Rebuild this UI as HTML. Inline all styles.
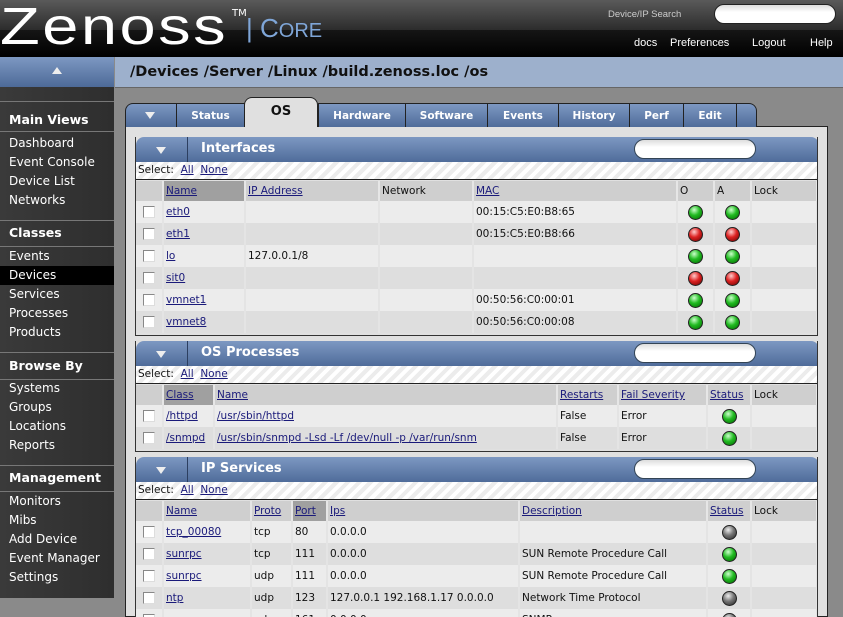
<!DOCTYPE html>
<html style="height:617px;overflow:hidden"><head><meta charset="utf-8"><style>
*{box-sizing:border-box;margin:0;padding:0}
body{width:843px;height:617px;overflow:hidden;background:#8a8a8a;font-family:"DejaVu Sans","Liberation Sans",sans-serif;font-size:10px;color:#111;position:relative}
.abs{position:absolute}
#top{left:0;top:0;width:843px;height:30px;background:linear-gradient(#5a5a5a,#2c2c2c)}
#nav{left:0;top:30px;width:843px;height:27px;background:linear-gradient(#151515,#000)}
#logo{left:0;top:-3px;font-family:"Liberation Sans",sans-serif;font-size:52px;color:#fff;letter-spacing:2px;transform:scaleX(1.25);transform-origin:left}
#core{left:246px;top:13px;font-family:"Liberation Sans",sans-serif;font-size:26px;color:#7fa6d8}
.navl{top:37px;color:#fff;font-size:11px;font-family:"Liberation Sans",sans-serif}
#side{left:0;top:57px;width:114px;height:541px;background:linear-gradient(90deg,#3a3a3a,#2e2e2e)}
#sidetop{left:0;top:57px;width:114px;height:30px;background:linear-gradient(#7d98c2,#4d6a98)}
.sh{left:9px;color:#fff;font-weight:bold;font-size:12.5px;font-family:"DejaVu Sans",sans-serif}
.si{left:9px;color:#fff;font-size:12px;font-family:"DejaVu Sans",sans-serif}
.sep{left:0;width:114px;height:1px;background:#777}
#crumb{left:115px;top:57px;width:728px;height:31px;background:#9db0cc;border-bottom:1px solid #666;font-weight:bold;font-size:14.5px;padding:7px 0 0 15px;color:#111}
#panel{left:125px;top:126px;width:703px;height:491px;background:#e0e0e0;border:1px solid #222}
.tab{top:103px;height:24px;background:linear-gradient(#7d98c2,#4f6c9a);color:#fff;font-weight:bold;font-size:10.5px;text-align:center;padding-top:6px;border:1px solid #222;border-bottom:none}
.box{left:135px;width:683px;background:#e0e0e0;border:1px solid #333;border-top:none;overflow:hidden}
.bh{position:absolute;left:0;top:0;width:683px;height:25px;background:linear-gradient(#7d98c2,#4f6c9a);border-radius:8px 8px 0 0;color:#fff;font-weight:bold;font-size:13px}
.bh .t{position:absolute;left:65px;top:4px}
.bh .dd{position:absolute;left:0;top:0;width:52px;height:25px;border-right:1px solid #2c3f60;border-radius:8px 0 0 0}
.tri{width:0;height:0;border-left:5px solid transparent;border-right:5px solid transparent;border-top:7px solid #eee;position:absolute;left:20px;top:10px}
.srch{position:absolute;left:498px;top:2px;width:122px;height:20px;background:linear-gradient(#ddd,#fff 40%);border-radius:10px;border:1px solid #345}
.sel{position:absolute;left:0;top:25px;width:681px;height:18px;background:repeating-linear-gradient(135deg,#fff 0 4px,#ececec 4px 8px);border-bottom:1px solid #222;padding:2px 0 0 2px;font-size:10.5px}
a{color:#1a1a7a;text-decoration:underline}
table{position:absolute;left:0;top:44px;border-collapse:collapse;table-layout:fixed;font-size:10.5px}
td{height:22px;border-right:2px solid #e4e4e4;padding-left:2px;white-space:nowrap;overflow:hidden}
tr.h td{height:20px;background:#cfcfcf;border-right:2px solid #e6e6e6}
tr.h td.s{background:#a0a0a0}
tr.r1 td{background:#ececec}tr.r2 td{background:#dedede}
.cb{display:inline-block;width:12px;height:12px;background:#fff;border:1px solid #888;border-right-color:#ddd;border-bottom-color:#ddd;margin-left:5px;vertical-align:middle}
.d{display:inline-block;width:15px;height:15px;border-radius:50%;border:1px solid #222;vertical-align:middle;margin-left:8px}
.g{background:radial-gradient(circle at 40% 30%,#cfc,#2b2 45%,#060)}
.rd{background:radial-gradient(circle at 40% 30%,#fcc,#d22 45%,#600)}
.gr{background:radial-gradient(circle at 40% 30%,#eee,#777 45%,#222)}
</style></head><body>
<div id="top" class="abs"></div><div id="nav" class="abs"></div>
<div id="logo" class="abs">Zenoss</div>
<div class="abs" style="left:232px;top:8px;color:#fff;font-size:10px">TM</div>
<div id="core" class="abs">| C<span style="font-size:20px">ORE</span></div>
<div class="abs" style="left:608px;top:9px;color:#ccc;font-size:9.5px;font-family:'Liberation Sans',sans-serif">Device/IP Search</div>
<div class="abs" style="left:714px;top:4px;width:122px;height:20px;background:linear-gradient(#ddd,#fff 40%);border-radius:10px;border:1px solid #222"></div>
<div class="abs navl" style="left:634px">docs</div>
<div class="abs navl" style="left:670px">Preferences</div>
<div class="abs navl" style="left:752px">Logout</div>
<div class="abs navl" style="left:810px">Help</div>
<div id="side" class="abs"></div>
<div id="sidetop" class="abs"><div class="tri" style="left:52px;top:10px;border-top:none;border-bottom:7px solid #eee"></div></div>
<div class="abs sep" style="top:101px"></div><div class="abs sh" style="top:112px">Main Views</div><div class="abs sep" style="top:131px"></div>
<div class="abs si" style="top:136px">Dashboard</div><div class="abs si" style="top:155px">Event Console</div><div class="abs si" style="top:174px">Device List</div><div class="abs si" style="top:193px">Networks</div>
<div class="abs sep" style="top:220px"></div><div class="abs sh" style="top:225px">Classes</div><div class="abs sep" style="top:246px"></div>
<div class="abs si" style="top:249px">Events</div>
<div class="abs" style="left:0;top:266px;width:114px;height:19px;background:#000"></div>
<div class="abs si" style="top:268px">Devices</div><div class="abs si" style="top:287px">Services</div><div class="abs si" style="top:306px">Processes</div><div class="abs si" style="top:325px">Products</div>
<div class="abs sep" style="top:352px"></div><div class="abs sh" style="top:358px">Browse By</div><div class="abs sep" style="top:379px"></div>
<div class="abs si" style="top:381px">Systems</div><div class="abs si" style="top:400px">Groups</div><div class="abs si" style="top:419px">Locations</div><div class="abs si" style="top:438px">Reports</div>
<div class="abs sep" style="top:465px"></div><div class="abs sh" style="top:470px">Management</div><div class="abs sep" style="top:491px"></div>
<div class="abs si" style="top:494px">Monitors</div><div class="abs si" style="top:513px">Mibs</div><div class="abs si" style="top:532px">Add Device</div><div class="abs si" style="top:551px">Event Manager</div><div class="abs si" style="top:570px">Settings</div>
<div id="crumb" class="abs">/Devices /Server /Linux /build.zenoss.loc /os</div>
<div id="panel" class="abs"></div>
<div class="abs tab" style="left:125px;width:52px;border-radius:8px 0 0 0"><div class="tri" style="left:19px;top:8px"></div></div>
<div class="abs tab" style="left:176px;width:69px">Status</div>
<div class="abs tab" style="left:244px;width:74px;top:97px;height:30px;background:#e0e0e0;color:#111;font-size:13px;border-radius:8px 8px 0 0;padding-top:6px;border-bottom:none">OS</div>
<div class="abs tab" style="left:318px;width:88px">Hardware</div>
<div class="abs tab" style="left:405px;width:83px">Software</div>
<div class="abs tab" style="left:487px;width:72px">Events</div>
<div class="abs tab" style="left:558px;width:72px">History</div>
<div class="abs tab" style="left:629px;width:55px">Perf</div>
<div class="abs tab" style="left:683px;width:54px">Edit</div>
<div class="abs tab" style="left:736px;width:21px;border-radius:0 8px 0 0"></div>

<div class="abs box" style="top:137px;height:199px">
<div class="bh"><div class="dd"><div class="tri"></div></div><div class="t">Interfaces</div><div class="srch"></div></div>
<div class="sel">Select: &nbsp;<a>All</a> &nbsp;<a>None</a></div>
<table style="width:681px"><colgroup><col style="width:27px"><col style="width:82px"><col style="width:134px"><col style="width:94px"><col style="width:204px"><col style="width:37px"><col style="width:37px"><col style="width:66px"></colgroup>
<tr class="h"><td></td><td class="s"><a>Name</a></td><td><a>IP Address</a></td><td>Network</td><td><a>MAC</a></td><td>O</td><td>A</td><td>Lock</td></tr>
<tr class="r1"><td><span class="cb"></span></td><td><a>eth0</a></td><td></td><td></td><td>00:15:C5:E0:B8:65</td><td><span class="d g"></span></td><td><span class="d g"></span></td><td></td></tr>
<tr class="r2"><td><span class="cb"></span></td><td><a>eth1</a></td><td></td><td></td><td>00:15:C5:E0:B8:66</td><td><span class="d rd"></span></td><td><span class="d rd"></span></td><td></td></tr>
<tr class="r1"><td><span class="cb"></span></td><td><a>lo</a></td><td>127.0.0.1/8</td><td></td><td></td><td><span class="d g"></span></td><td><span class="d g"></span></td><td></td></tr>
<tr class="r2"><td><span class="cb"></span></td><td><a>sit0</a></td><td></td><td></td><td></td><td><span class="d rd"></span></td><td><span class="d rd"></span></td><td></td></tr>
<tr class="r1"><td><span class="cb"></span></td><td><a>vmnet1</a></td><td></td><td></td><td>00:50:56:C0:00:01</td><td><span class="d g"></span></td><td><span class="d g"></span></td><td></td></tr>
<tr class="r2"><td><span class="cb"></span></td><td><a>vmnet8</a></td><td></td><td></td><td>00:50:56:C0:00:08</td><td><span class="d g"></span></td><td><span class="d g"></span></td><td></td></tr>
</table></div>

<div class="abs box" style="top:341px;height:111px">
<div class="bh"><div class="dd"><div class="tri"></div></div><div class="t">OS Processes</div><div class="srch"></div></div>
<div class="sel">Select: &nbsp;<a>All</a> &nbsp;<a>None</a></div>
<table style="width:681px"><colgroup><col style="width:27px"><col style="width:51px"><col style="width:343px"><col style="width:61px"><col style="width:89px"><col style="width:44px"><col style="width:66px"></colgroup>
<tr class="h"><td></td><td class="s"><a>Class</a></td><td><a>Name</a></td><td><a>Restarts</a></td><td><a>Fail Severity</a></td><td><a>Status</a></td><td>Lock</td></tr>
<tr class="r1"><td><span class="cb"></span></td><td><a>/httpd</a></td><td><a>/usr/sbin/httpd</a></td><td>False</td><td>Error</td><td><span class="d g" style="margin-left:12px"></span></td><td></td></tr>
<tr class="r2"><td><span class="cb"></span></td><td><a>/snmpd</a></td><td><a>/usr/sbin/snmpd -Lsd -Lf /dev/null -p /var/run/snm</a></td><td>False</td><td>Error</td><td><span class="d g" style="margin-left:12px"></span></td><td></td></tr>
</table></div>

<div class="abs box" style="top:457px;height:160px;border-bottom:none">
<div class="bh"><div class="dd"><div class="tri"></div></div><div class="t">IP Services</div><div class="srch"></div></div>
<div class="sel">Select: &nbsp;<a>All</a> &nbsp;<a>None</a></div>
<table style="width:681px"><colgroup><col style="width:27px"><col style="width:88px"><col style="width:41px"><col style="width:35px"><col style="width:192px"><col style="width:188px"><col style="width:44px"><col style="width:66px"></colgroup>
<tr class="h"><td></td><td><a>Name</a></td><td><a>Proto</a></td><td class="s"><a>Port</a></td><td><a>Ips</a></td><td><a>Description</a></td><td><a>Status</a></td><td>Lock</td></tr>
<tr class="r1"><td><span class="cb"></span></td><td><a>tcp_00080</a></td><td>tcp</td><td>80</td><td>0.0.0.0</td><td></td><td><span class="d gr" style="margin-left:12px"></span></td><td></td></tr>
<tr class="r2"><td><span class="cb"></span></td><td><a>sunrpc</a></td><td>tcp</td><td>111</td><td>0.0.0.0</td><td>SUN Remote Procedure Call</td><td><span class="d g" style="margin-left:12px"></span></td><td></td></tr>
<tr class="r1"><td><span class="cb"></span></td><td><a>sunrpc</a></td><td>udp</td><td>111</td><td>0.0.0.0</td><td>SUN Remote Procedure Call</td><td><span class="d g" style="margin-left:12px"></span></td><td></td></tr>
<tr class="r2"><td><span class="cb"></span></td><td><a>ntp</a></td><td>udp</td><td>123</td><td>127.0.0.1 192.168.1.17 0.0.0.0</td><td>Network Time Protocol</td><td><span class="d gr" style="margin-left:12px"></span></td><td></td></tr>
<tr class="r1"><td><span class="cb"></span></td><td><a>snmp</a></td><td>udp</td><td>161</td><td>0.0.0.0</td><td>SNMP</td><td><span class="d gr" style="margin-left:12px"></span></td><td></td></tr>
</table></div>
</body></html>
